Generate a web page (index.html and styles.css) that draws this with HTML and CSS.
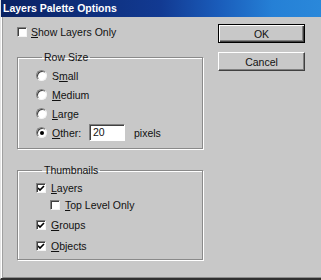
FILE: index.html
```html
<!DOCTYPE html>
<html lang="en">
    <head>
        <meta name="viewport" content="width=device-width, initial-scale=1.0">
        <title>Layers Palette Options</title>
        <link rel="stylesheet" href="styles.css">
    </head>
    <body>
        <div class="window">
            <div class="titlebar">Layers Palette Options</div>
            <div class="content">
                <div class="main">
                    <div class="row show-row">
                        <span class="check"></span>
                        <span><u>S</u>how Layers Only</span>
                    </div>

                    <fieldset class="group rowsize">
                        <legend>Row Size</legend>
                        <div class="row opt"><span class="radio"></span><span>S<u>m</u>all</span></div>
                        <div class="row opt"><span class="radio"></span><span><u>M</u>edium</span></div>
                        <div class="row opt"><span class="radio"></span><span><u>L</u>arge</span></div>
                        <div class="row opt">
                            <span class="radio on"></span><span class="other-label"><u>O</u>ther:</span>
                            <span class="field">20</span>
                            <span class="unit">pixels</span>
                        </div>
                    </fieldset>

                    <fieldset class="group thumbs">
                        <legend>Thumbnails</legend>
                        <div class="row item"><span class="check on"></span><span><u>L</u>ayers</span></div>
                        <div class="row item sub"><span class="check"></span><span><u>T</u>op Level Only</span></div>
                        <div class="row item groups"><span class="check on"></span><span><u>G</u>roups</span></div>
                        <div class="row item objects"><span class="check on"></span><span><u>O</u>bjects</span></div>
                    </fieldset>
                </div>

                <div class="buttons">
                    <button type="button" class="btn default">OK</button>
                    <button type="button" class="btn">Cancel</button>
                </div>
            </div>
        </div>
    </body>
</html>
```

FILE: styles.css
```css
* {
    box-sizing: border-box;
}

body {
    margin: 0;
    font-family: "Liberation Sans", Arial, sans-serif;
    font-size: 10.5px;
    color: #111;
}

u {
    text-decoration: underline;
    text-underline-offset: 1px;
}

.window {
    width: 321px;
    height: 280px;
    background: #c8c8c8;
    border-left: 1px solid #e4e4e4;
    border-bottom: 2px solid #303030;
    box-shadow: inset 1px 0 0 #ffffff, inset 2px 0 0 #a0a0a0, inset 0 -1px 0 #8c8c8c;
    overflow: hidden;
}

.titlebar {
    height: 17px;
    margin-left: -1px;
    padding-left: 3px;
    line-height: 17px;
    font-weight: bold;
    font-size: 10.5px;
    color: #fff;
    background: linear-gradient(90deg, #0a2262 0%, #123a92 50%, #1a5cba 68%, #2580d6 85%, #2a88da 100%);
}

.content {
    display: flex;
    padding-left: 16px;
}

.main {
    width: 186px;
}

.row {
    display: flex;
    align-items: center;
}

.show-row {
    height: 13px;
    margin-top: 8px;
    gap: 4px;
}

.group {
    margin: 0;
    padding: 0;
    border: 1px solid #8a8a8a;
    box-shadow: 1px 1px 0 #ffffff, inset 1px 1px 0 #ffffff;
}

.group legend {
    margin-left: 6px;
    padding: 0 2px;
    line-height: 13px;
}

.rowsize {
    margin-top: 13px;
    padding: 2px 0 6px 18px;
}

.opt {
    height: 19px;
    gap: 5px;
}

.other-label {
    width: 32px;
}

.field {
    width: 36px;
    height: 17px;
    padding-left: 3px;
    line-height: 15px;
    background: #fff;
    border-top: 1px solid #808080;
    border-left: 1px solid #808080;
    border-right: 1px solid #fff;
    border-bottom: 1px solid #fff;
    box-shadow: inset 1px 1px 0 #404040;
}

.unit {
    margin-left: 4px;
}

.thumbs {
    margin-top: 15px;
    padding: 2px 0 5px 18px;
}

.item {
    height: 17px;
    gap: 5px;
}

.item.sub {
    margin-left: 14px;
}

.item.groups {
    margin-top: 3px;
}

.item.objects {
    margin-top: 4px;
}

.check {
    width: 10px;
    height: 10px;
    flex: none;
    background: #fff;
    border-top: 1px solid #808080;
    border-left: 1px solid #808080;
    border-right: 1px solid #f4f4f4;
    border-bottom: 1px solid #f4f4f4;
    box-shadow: inset 1px 1px 0 #404040;
}

.check.on {
    background: #fff url("data:image/svg+xml,%3Csvg xmlns='http://www.w3.org/2000/svg' width='8' height='8'%3E%3Cpath d='M1 4 L3 6 L7 2' fill='none' stroke='%23000' stroke-width='1.6'/%3E%3C/svg%3E") center / 8px 8px no-repeat;
}

.radio {
    width: 11px;
    height: 11px;
    flex: none;
    border-radius: 50%;
    background: #fff;
    border: 1px solid;
    border-color: #808080 #f4f4f4 #f4f4f4 #808080;
    box-shadow: inset 1px 1px 0 #404040;
    display: flex;
    align-items: center;
    justify-content: center;
}

.radio.on::after {
    content: "";
    width: 4px;
    height: 4px;
    border-radius: 50%;
    background: #000;
}

.buttons {
    margin-left: 15px;
    padding-top: 7px;
    display: flex;
    flex-direction: column;
    gap: 9px;
}

.btn {
    width: 87px;
    height: 19px;
    padding: 0;
    font: inherit;
    color: #111;
    background: #c8c8c8;
    border: 1px solid;
    border-color: #ffffff #404040 #404040 #ffffff;
    box-shadow: inset -1px -1px 0 #808080;
}

.btn.default {
    border: 1px solid #000;
    box-shadow: inset 1px 1px 0 #ffffff, inset -1px -1px 0 #404040, inset -2px -2px 0 #808080;
}
```
